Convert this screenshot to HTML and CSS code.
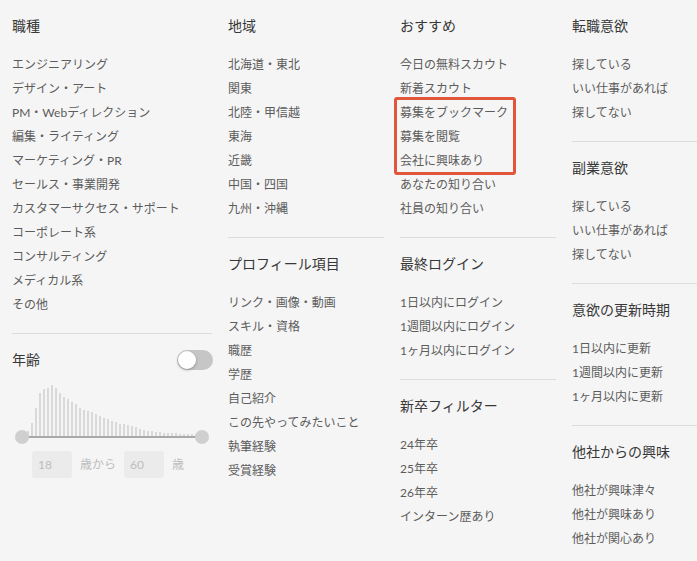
FILE: index.html
```html
<!DOCTYPE html>
<html lang="ja">
<head>
<meta charset="utf-8">
<title>検索フィルター</title>
<link rel="stylesheet" href="styles.css">
</head>
<body>
<div class="page">
  <div class="col col-wide">
    <section class="sec">
      <h3 class="sec-title">職種</h3>
      <ul class="opts">
        <li>エンジニアリング</li>
        <li>デザイン・アート</li>
        <li>PM・Webディレクション</li>
        <li>編集・ライティング</li>
        <li>マーケティング・PR</li>
        <li>セールス・事業開発</li>
        <li>カスタマーサクセス・サポート</li>
        <li>コーポレート系</li>
        <li>コンサルティング</li>
        <li>メディカル系</li>
        <li>その他</li>
      </ul>
    </section>
    <section class="sec">
      <div class="sec-head">
        <h3 class="sec-title">年齢</h3>
        <span class="toggle"><span class="knob"></span></span>
      </div>
      <div class="range">
        <div class="hist">
          <span class="bar" style="height:5px"></span>
          <span class="bar" style="height:13px"></span>
          <span class="bar" style="height:28px"></span>
          <span class="bar" style="height:43px"></span>
          <span class="bar" style="height:47px"></span>
          <span class="bar" style="height:48px"></span>
          <span class="bar" style="height:51px"></span>
          <span class="bar" style="height:48px"></span>
          <span class="bar" style="height:43px"></span>
          <span class="bar" style="height:39px"></span>
          <span class="bar" style="height:37px"></span>
          <span class="bar" style="height:34px"></span>
          <span class="bar" style="height:32px"></span>
          <span class="bar" style="height:28px"></span>
          <span class="bar" style="height:26px"></span>
          <span class="bar" style="height:25px"></span>
          <span class="bar" style="height:24px"></span>
          <span class="bar" style="height:22px"></span>
          <span class="bar" style="height:20px"></span>
          <span class="bar" style="height:18px"></span>
          <span class="bar" style="height:17px"></span>
          <span class="bar" style="height:15px"></span>
          <span class="bar" style="height:14px"></span>
          <span class="bar" style="height:12px"></span>
          <span class="bar" style="height:12px"></span>
          <span class="bar" style="height:11px"></span>
          <span class="bar" style="height:10px"></span>
          <span class="bar" style="height:9px"></span>
          <span class="bar" style="height:7px"></span>
          <span class="bar" style="height:6px"></span>
          <span class="bar" style="height:5px"></span>
          <span class="bar" style="height:5px"></span>
          <span class="bar" style="height:4px"></span>
          <span class="bar" style="height:4px"></span>
          <span class="bar" style="height:3px"></span>
          <span class="bar" style="height:3px"></span>
          <span class="bar" style="height:3px"></span>
          <span class="bar" style="height:3px"></span>
          <span class="bar" style="height:2px"></span>
          <span class="bar" style="height:2px"></span>
          <span class="bar" style="height:2px"></span>
          <span class="bar" style="height:2px"></span>
          <span class="bar" style="height:2px"></span>
        </div>
        <div class="track">
          <span class="handle handle-l"></span>
          <span class="handle handle-r"></span>
        </div>
      </div>
      <div class="age-inputs">
        <span class="age-box">18</span>
        <span class="age-label">歳から</span>
        <span class="age-box">60</span>
        <span class="age-label">歳</span>
      </div>
    </section>
  </div>

  <div class="col">
    <section class="sec">
      <h3 class="sec-title">地域</h3>
      <ul class="opts">
        <li>北海道・東北</li>
        <li>関東</li>
        <li>北陸・甲信越</li>
        <li>東海</li>
        <li>近畿</li>
        <li>中国・四国</li>
        <li>九州・沖縄</li>
      </ul>
    </section>
    <section class="sec">
      <h3 class="sec-title">プロフィール項目</h3>
      <ul class="opts">
        <li>リンク・画像・動画</li>
        <li>スキル・資格</li>
        <li>職歴</li>
        <li>学歴</li>
        <li>自己紹介</li>
        <li>この先やってみたいこと</li>
        <li>執筆経験</li>
        <li>受賞経験</li>
      </ul>
    </section>
  </div>

  <div class="col">
    <section class="sec">
      <h3 class="sec-title">おすすめ</h3>
      <ul class="opts">
        <li>今日の無料スカウト</li>
        <li>新着スカウト</li>
        <li class="highlight">
          <ul class="opts opts-inner">
            <li>募集をブックマーク</li>
            <li>募集を閲覧</li>
            <li>会社に興味あり</li>
          </ul>
        </li>
        <li>あなたの知り合い</li>
        <li>社員の知り合い</li>
      </ul>
    </section>
    <section class="sec">
      <h3 class="sec-title">最終ログイン</h3>
      <ul class="opts">
        <li>1日以内にログイン</li>
        <li>1週間以内にログイン</li>
        <li>1ヶ月以内にログイン</li>
      </ul>
    </section>
    <section class="sec">
      <h3 class="sec-title">新卒フィルター</h3>
      <ul class="opts">
        <li>24年卒</li>
        <li>25年卒</li>
        <li>26年卒</li>
        <li>インターン歴あり</li>
      </ul>
    </section>
  </div>

  <div class="col">
    <section class="sec">
      <h3 class="sec-title">転職意欲</h3>
      <ul class="opts">
        <li>探している</li>
        <li>いい仕事があれば</li>
        <li>探してない</li>
      </ul>
    </section>
    <section class="sec">
      <h3 class="sec-title">副業意欲</h3>
      <ul class="opts">
        <li>探している</li>
        <li>いい仕事があれば</li>
        <li>探してない</li>
      </ul>
    </section>
    <section class="sec">
      <h3 class="sec-title">意欲の更新時期</h3>
      <ul class="opts">
        <li>1日以内に更新</li>
        <li>1週間以内に更新</li>
        <li>1ヶ月以内に更新</li>
      </ul>
    </section>
    <section class="sec">
      <h3 class="sec-title">他社からの興味</h3>
      <ul class="opts">
        <li>他社が興味津々</li>
        <li>他社が興味あり</li>
        <li>他社が関心あり</li>
      </ul>
    </section>
  </div>
</div>
</body>
</html>
```
FILE: styles.css
```css
html, body {
  margin: 0;
  padding: 0;
  background: #f5f5f5;
  overflow: hidden;
}

body {
  font-family: Lato, "Noto Sans CJK JP", sans-serif;
  color: #5c5c5c;
}

.page {
  display: flex;
  gap: 16px;
  padding-left: 12px;
  align-items: flex-start;
}

.col {
  flex: none;
  width: 156px;
  display: flex;
  flex-direction: column;
}

.col-wide {
  width: 200px;
}

.sec {
  padding: 16px 0 16px;
}

.sec + .sec {
  border-top: 1px solid #dcdcdc;
}

.sec-title {
  margin: 0 0 16px;
  font-size: 14px;
  line-height: 20px;
  font-weight: normal;
  color: #383838;
}

.opts {
  list-style: none;
  margin: 0;
  padding: 1px 0 0;
  font-size: 12px;
  line-height: 24px;
  white-space: nowrap;
}

.opts-inner {
  padding: 0;
}

.highlight {
  position: relative;
}

.highlight::after {
  content: "";
  position: absolute;
  left: -6px;
  top: -4px;
  width: 122px;
  height: 78px;
  box-sizing: border-box;
  border: 3px solid #e1553b;
  border-radius: 3px;
}

.sec-head {
  display: flex;
  align-items: center;
  justify-content: space-between;
  margin-bottom: 14px;
}

.sec-head .sec-title {
  margin: 0;
}

.toggle {
  position: relative;
  width: 36px;
  height: 20px;
  margin-right: -1px;
  border-radius: 10px;
  background: #c6c6c6;
  display: flex;
  align-items: center;
  padding: 0 1px;
  box-sizing: border-box;
}

.knob {
  width: 18px;
  height: 18px;
  border-radius: 50%;
  background: #fff;
  box-shadow: 0 1px 3px rgba(0, 0, 0, 0.3);
}

.range {
  margin: 1px 10px 0;
}

.hist {
  height: 52px;
  display: flex;
  align-items: flex-end;
  gap: 2px;
  padding-left: 5px;
}

.bar {
  flex: none;
  width: 2px;
  background: #d9d9d9;
}

.track {
  position: relative;
  height: 2px;
  background: #a9a9a9;
}

.handle {
  position: absolute;
  top: -6px;
  width: 14px;
  height: 14px;
  border-radius: 50%;
  background: #cfcfcf;
}

.handle-l {
  left: -7px;
}

.handle-r {
  right: -7px;
}

.age-inputs {
  display: flex;
  align-items: center;
  gap: 8px;
  margin: 13px 0 0 20px;
  font-size: 12px;
  color: #bdbdbd;
}

.age-box {
  width: 40px;
  height: 27px;
  line-height: 27px;
  padding-left: 6px;
  box-sizing: border-box;
  background: #ebebeb;
  border-radius: 3px;
}

.age-label {
  line-height: 27px;
}
```
